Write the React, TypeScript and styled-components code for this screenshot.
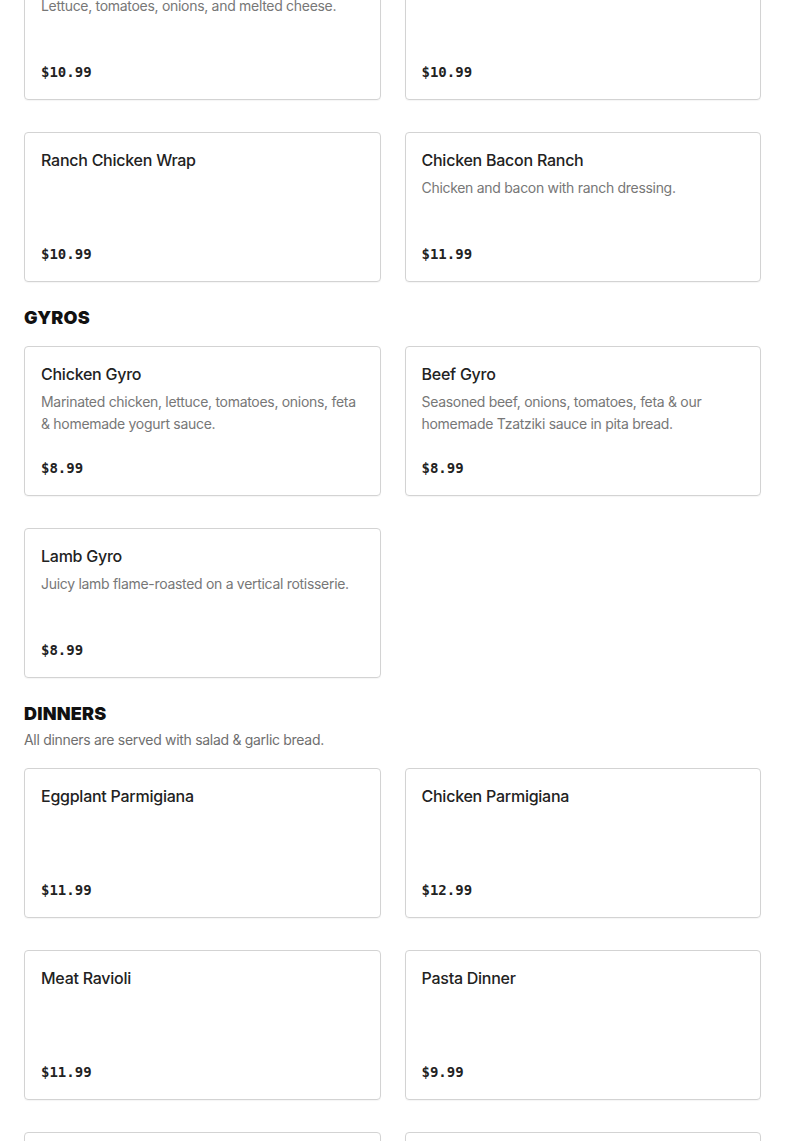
import styled, { createGlobalStyle } from 'styled-components';

const GlobalStyle = createGlobalStyle`
  html, body { margin: 0; padding: 0; background: #fff; }
  body { font-family: "Inter", "Liberation Sans", sans-serif; color: #222; }
`;

const Page = styled.main`
  padding: 0 24px;
  margin-top: -50px;
  display: flex;
  flex-direction: column;
  gap: 24px;
`;

const Section = styled.section`
  display: flex;
  flex-direction: column;
`;

const SectionTitle = styled.h2`
  margin: 0;
  font-size: 18px;
  line-height: 24px;
  font-weight: 900;
  color: #111;
  letter-spacing: 0.2px;
`;

const SectionNote = styled.p`
  margin: 3px 0 0;
  font-size: 14px;
  line-height: 22px;
  color: #6f6f6f;
  letter-spacing: -0.3px;
`;

const Grid = styled.div<{ $top: number }>`
  display: grid;
  grid-template-columns: 1fr 1fr;
  column-gap: 24px;
  row-gap: 32px;
  margin-top: ${p => p.$top}px;
`;

const Card = styled.article`
  display: flex;
  flex-direction: column;
  min-height: 150px;
  box-sizing: border-box;
  padding: 16px;
  border: 1px solid #d3d3d3;
  border-radius: 4px;
  box-shadow: 0 1px 1px rgba(0, 0, 0, 0.04);
`;

const Name = styled.h3`
  margin: 0;
  font-size: 16px;
  line-height: 22px;
  font-weight: 500;
  color: #222;
  letter-spacing: -0.25px;
`;

const Desc = styled.p`
  margin: 6px 0 0;
  font-size: 14px;
  line-height: 22px;
  color: #777;
  letter-spacing: -0.3px;
`;

const Price = styled.span`
  margin-top: auto;
  padding-top: 12px;
  font-family: "DejaVu Sans Mono", "Liberation Mono", monospace;
  font-weight: 700;
  font-size: 14px;
  line-height: 22px;
  color: #222;
`;

type Item = { name: string; desc?: string; price: string };

const MenuCard = ({ item }: { item: Item }) => (
  <Card>
    <Name>{item.name}</Name>
    {item.desc && <Desc>{item.desc}</Desc>}
    <Price>{item.price}</Price>
  </Card>
);

const wraps: Item[] = [
  { name: 'Cheeseburger Wrap', desc: 'Lettuce, tomatoes, onions, and melted cheese.', price: '$10.99' },
  { name: 'Buffalo Chicken Wrap', price: '$10.99' },
  { name: 'Ranch Chicken Wrap', price: '$10.99' },
  { name: 'Chicken Bacon Ranch', desc: 'Chicken and bacon with ranch dressing.', price: '$11.99' },
];

const gyros: Item[] = [
  { name: 'Chicken Gyro', desc: 'Marinated chicken, lettuce, tomatoes, onions, feta & homemade yogurt sauce.', price: '$8.99' },
  { name: 'Beef Gyro', desc: 'Seasoned beef, onions, tomatoes, feta & our homemade Tzatziki sauce in pita bread.', price: '$8.99' },
  { name: 'Lamb Gyro', desc: 'Juicy lamb flame-roasted on a vertical rotisserie.', price: '$8.99' },
];

const dinners: Item[] = [
  { name: 'Eggplant Parmigiana', price: '$11.99' },
  { name: 'Chicken Parmigiana', price: '$12.99' },
  { name: 'Meat Ravioli', price: '$11.99' },
  { name: 'Pasta Dinner', price: '$9.99' },
  { name: 'Baked Ziti', price: '$11.99' },
  { name: 'Stuffed Shells', price: '$11.99' },
];

const App = () => (
  <>
    <GlobalStyle />
    <Page>
      <Section>
        <Grid $top={0}>
          {wraps.map(i => <MenuCard key={i.name} item={i} />)}
        </Grid>
      </Section>
      <Section>
        <SectionTitle>GYROS</SectionTitle>
        <Grid $top={16}>
          {gyros.map(i => <MenuCard key={i.name} item={i} />)}
        </Grid>
      </Section>
      <Section>
        <SectionTitle>DINNERS</SectionTitle>
        <SectionNote>All dinners are served with salad &amp; garlic bread.</SectionNote>
        <Grid $top={17}>
          {dinners.map(i => <MenuCard key={i.name} item={i} />)}
        </Grid>
      </Section>
    </Page>
  </>
);

export default App;
